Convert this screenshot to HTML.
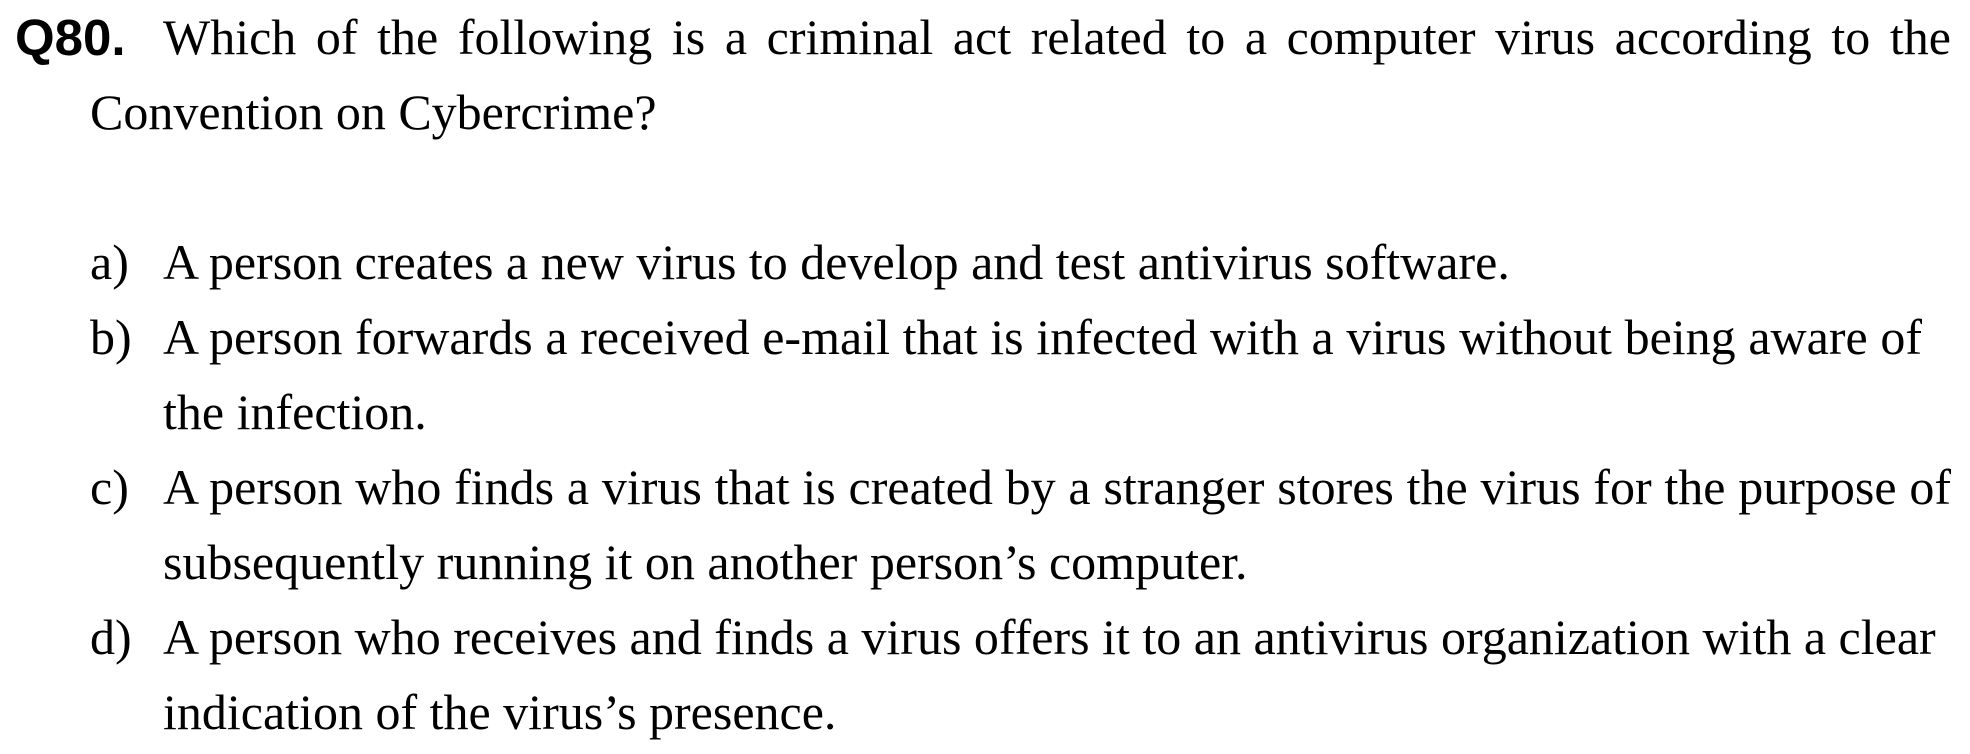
<!DOCTYPE html>
<html><head><meta charset="utf-8"><style>
html,body{margin:0;padding:0;background:#fff;width:1970px;height:754px;overflow:hidden}
.l{position:absolute;font-family:"Liberation Serif",serif;font-size:50px;line-height:75px;color:#000;white-space:nowrap}
.j{text-align:justify;text-align-last:justify;white-space:normal}
.q{position:absolute;left:15px;top:0;font-family:"Liberation Sans",sans-serif;font-weight:bold;font-size:51px;line-height:75px}
</style></head><body>
<div class="q">Q80.</div>
<div class="l j" style="left:163px;top:0;width:1788px">Which of the following is a criminal act related to a computer virus according to the</div>
<div class="l" style="left:90px;top:75px">Convention on Cybercrime?</div>
<div class="l" style="left:90px;top:225px">a)</div>
<div class="l" style="left:163px;top:225px">A person creates a new virus to develop and test antivirus software.</div>
<div class="l" style="left:90px;top:300px">b)</div>
<div class="l j" style="left:163px;top:300px;width:1759px">A person forwards a received e-mail that is infected with a virus without being aware of</div>
<div class="l" style="left:163px;top:375px">the infection.</div>
<div class="l" style="left:90px;top:450px">c)</div>
<div class="l j" style="left:163px;top:450px;width:1788px">A person who finds a virus that is created by a stranger stores the virus for the purpose of</div>
<div class="l" style="left:163px;top:525px">subsequently running it on another person’s computer.</div>
<div class="l" style="left:90px;top:600px">d)</div>
<div class="l" style="left:163px;top:600px">A person who receives and finds a virus offers it to an antivirus organization with a clear</div>
<div class="l" style="left:163px;top:675px">indication of the virus’s presence.</div>
</body></html>
